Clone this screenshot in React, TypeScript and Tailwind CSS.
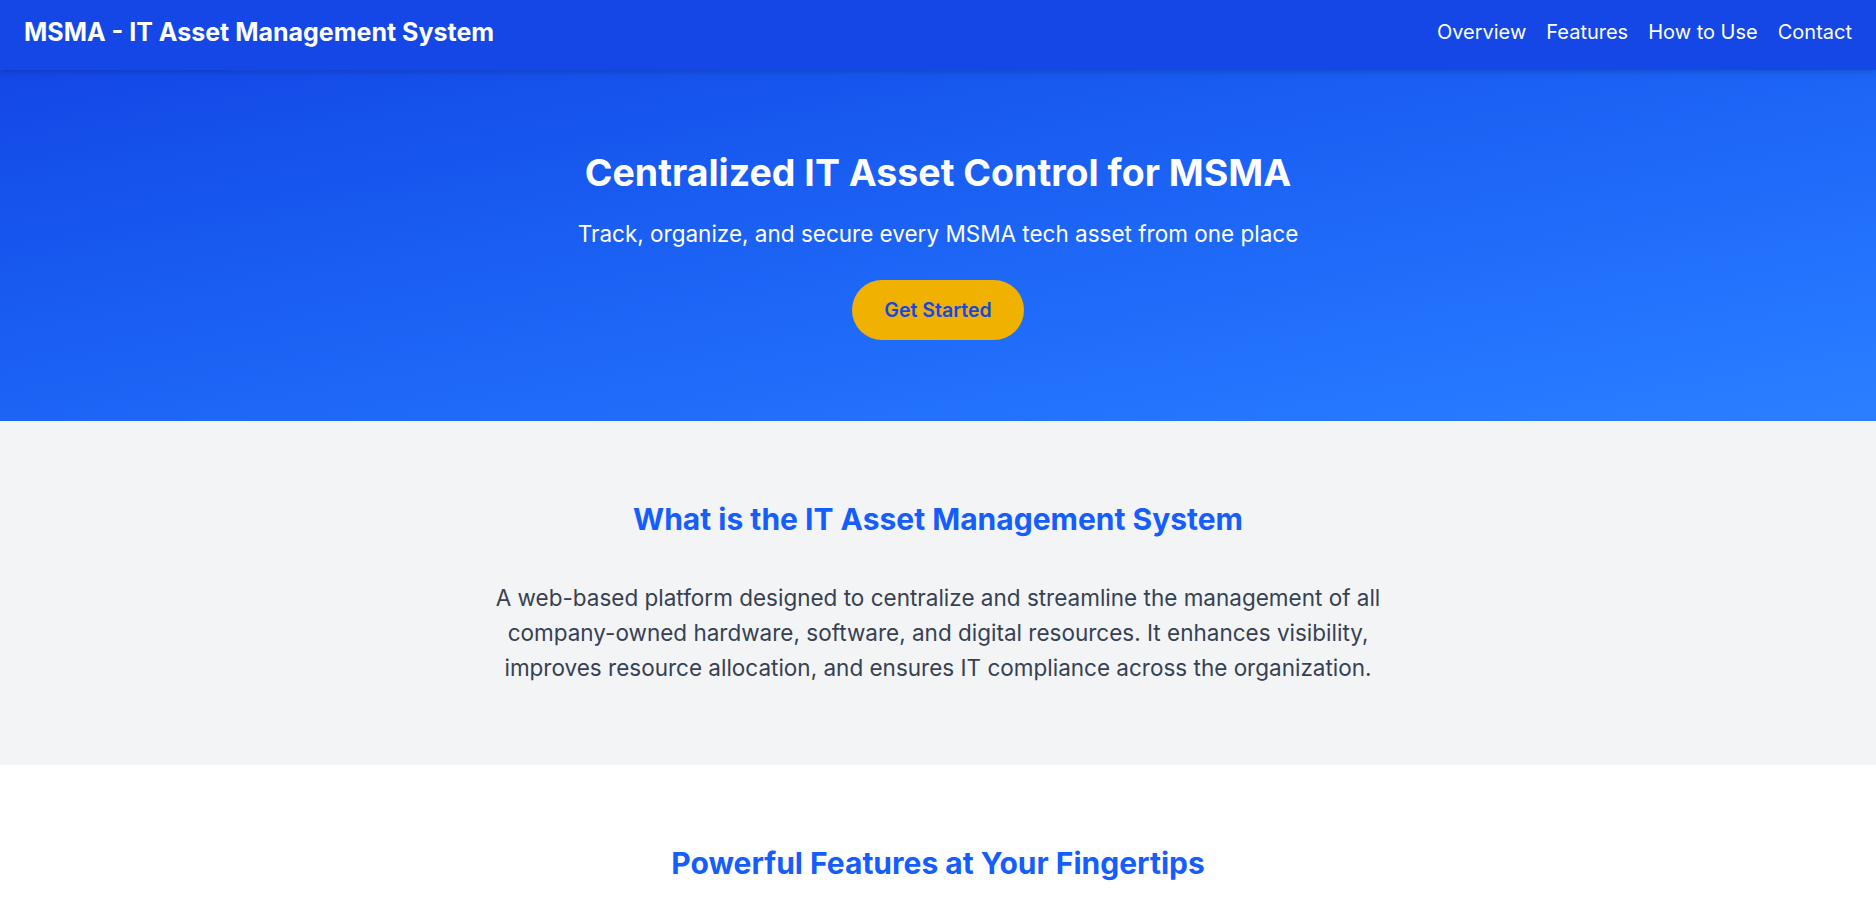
import { Boxes, ShieldCheck, BarChart3, Users } from "lucide-react";

const navLinks = ["Overview", "Features", "How to Use", "Contact"];

const features = [
  { title: "Asset Tracking", text: "Keep a live record of every device, license and resource.", icon: <Boxes size={28} /> },
  { title: "Secure Access", text: "Role-based permissions keep sensitive data protected.", icon: <ShieldCheck size={28} /> },
  { title: "Reports", text: "Generate usage and compliance reports in seconds.", icon: <BarChart3 size={28} /> },
  { title: "Assignments", text: "Know who holds what, and when it is due back.", icon: <Users size={28} /> },
];

function Header() {
  return (
    <header className="sticky top-0 z-10 bg-blue-700 text-white shadow-md">
      <div className="flex items-center justify-between px-6 pt-4 pb-[22px]">
        <h1 className="text-[25px] leading-8 font-bold">MSMA - IT Asset Management System</h1>
        <nav className="flex gap-5 text-xl">
          {navLinks.map((link) => (
            <a key={link} href="#" className="hover:underline">
              {link}
            </a>
          ))}
        </nav>
      </div>
    </header>
  );
}

function App() {
  return (
    <div className="min-h-screen bg-white font-['Inter',sans-serif]">
      <Header />

      {/* hero */}
      <section className="bg-gradient-to-br from-blue-700 to-blue-500 pt-[83px] pb-[81px] text-center text-white">
        <h2 className="mb-[25px] text-[37.5px] leading-10 font-bold">Centralized IT Asset Control for MSMA</h2>
        <p className="mb-[30px] text-[22.5px] leading-8">
          Track, organize, and secure every MSMA tech asset from one place
        </p>
        <button className="rounded-full bg-yellow-500 px-8 py-4 text-[19.5px] leading-7 font-semibold text-blue-700">
          Get Started
        </button>
      </section>

      {/* overview */}
      <section className="bg-gray-100 pt-20 pb-20 text-center">
        <h2 className="mb-[43px] text-3xl font-bold text-blue-600">What is the IT Asset Management System</h2>
        <p className="mx-auto max-w-4xl text-[22.5px] leading-[35px] text-gray-700">
          A web-based platform designed to centralize and streamline the management of all company-owned
          hardware, software, and digital resources. It enhances visibility, improves resource allocation,
          and ensures IT compliance across the organization.
        </p>
      </section>

      {/* features */}
      <section className="py-20 text-center">
        <h2 className="mb-12 text-3xl font-bold text-blue-600">Powerful Features at Your Fingertips</h2>
        <div className="mx-auto grid max-w-6xl grid-cols-4 gap-8 px-5">
          {features.map((f) => (
            <div key={f.title} className="rounded-xl bg-gray-100 p-6 shadow">
              <div className="mb-4 flex justify-center text-blue-600">{f.icon}</div>
              <h3 className="mb-2 text-xl font-semibold text-gray-800">{f.title}</h3>
              <p className="text-gray-600">{f.text}</p>
            </div>
          ))}
        </div>
      </section>
    </div>
  );
}

export default App;
